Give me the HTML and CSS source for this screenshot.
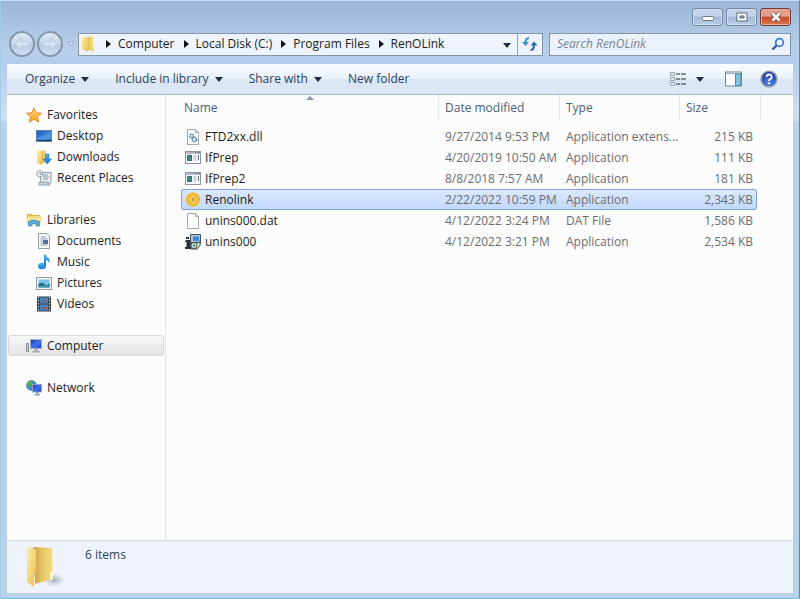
FILE: index.html
```html
<!DOCTYPE html>
<html lang="en">
<head>
<meta charset="utf-8">
<meta name="viewport" content="width=device-width, initial-scale=1">
<title>RenOLink</title>
<link rel="stylesheet" href="styles.css">
</head>
<body>
<svg width="0" height="0" class="defs" aria-hidden="true">
  <defs>
    <linearGradient id="gold" x1="0" y1="0" x2="1" y2="1"><stop offset="0" stop-color="#fff0a8"/><stop offset="1" stop-color="#e9bf48"/></linearGradient>
    <linearGradient id="goldSide" x1="0" y1="0" x2="1" y2="0"><stop offset="0" stop-color="#c9a24a"/><stop offset=".5" stop-color="#e6c665"/><stop offset="1" stop-color="#f7df82"/></linearGradient>
    <linearGradient id="screen" x1="0" y1="0" x2="1" y2="1"><stop offset="0" stop-color="#1630a8"/><stop offset=".5" stop-color="#3f74ea"/><stop offset="1" stop-color="#1a38c4"/></linearGradient>
    <linearGradient id="desk" x1="0" y1="0" x2="1" y2="1"><stop offset="0" stop-color="#1d58b8"/><stop offset=".6" stop-color="#3f86dc"/><stop offset="1" stop-color="#2468c4"/></linearGradient>
    <linearGradient id="star" x1="0" y1="0" x2="0" y2="1"><stop offset="0" stop-color="#ffe27a"/><stop offset="1" stop-color="#f99b1c"/></linearGradient>
    <linearGradient id="blue" x1="0" y1="0" x2="0" y2="1"><stop offset="0" stop-color="#4fb4f0"/><stop offset="1" stop-color="#1a78d0"/></linearGradient>
    <linearGradient id="ball" x1="0" y1="0" x2="0" y2="1"><stop offset="0" stop-color="#dfe9f4"/><stop offset=".48" stop-color="#c6d7e9"/><stop offset=".52" stop-color="#b2c8df"/><stop offset="1" stop-color="#d6e6f5"/></linearGradient>
    <radialGradient id="help" cx=".5" cy=".75" r=".7"><stop offset="0" stop-color="#5a8cf0"/><stop offset="1" stop-color="#17309c"/></radialGradient>
    <radialGradient id="shade"><stop offset="0" stop-color="#8f98a6" stop-opacity=".75"/><stop offset="1" stop-color="#a5aebb" stop-opacity="0"/></radialGradient>
    <symbol id="app" viewBox="0 0 16 16"><rect x=".5" y="1.500" width="15" height="12" fill="#f6f8f9" stroke="#8a949c"/><path d="M1 3h14" stroke="#b4bdc6" stroke-width="2"/><path d="M10 2.500h1M12 2.500h1M14 2.500h1" stroke="#59636c"/><rect x="2" y="5" width="5" height="6" fill="#33766d"/><path d="M3 6l3 4" stroke="#64a8a0"/><path d="M8.500 6h3M8.500 8h3M8.500 10h3" stroke="#a9b4bd"/><path d="M13.500 5v5" stroke="#6b767e"/></symbol>
  </defs>
</svg>
<div class="window">
  <header class="titlebar">
    <button class="ctl" aria-label="Minimize"><svg width="14" height="12" viewBox="0 0 14 12"><rect x="1.500" y="5.500" width="11" height="4" rx="1" fill="#fff" stroke="#69788c"/></svg></button>
    <button class="ctl" aria-label="Maximize"><svg width="14" height="12" viewBox="0 0 14 12"><rect x="2" y="2" width="10" height="8" fill="#fff" stroke="#5e6d80"/><rect x="5" y="5" width="4" height="2" fill="#8fa9c6" stroke="#5e6d80"/></svg></button>
    <button class="ctl close" aria-label="Close"><svg width="14" height="12" viewBox="0 0 14 12"><path d="M3.500 2.500l7 7M10.500 2.500l-7 7" stroke="#75453f" stroke-width="4.500"/><path d="M3.500 2.500l7 7M10.500 2.500l-7 7" stroke="#fff" stroke-width="2.800"/></svg></button>
  </header>

  <nav class="navbar" aria-label="Address">
    <div class="history">
      <button aria-label="Back"><svg width="28" height="28" viewBox="0 0 28 28"><circle cx="14" cy="14" r="12" fill="url(#ball)" stroke="#8496ab" stroke-width="2"/><path d="M7 14l6-6v4h8v4h-8v4z" fill="#d6e3f0" stroke="#bccde0"/></svg></button>
      <button aria-label="Forward"><svg width="28" height="28" viewBox="0 0 28 28"><circle cx="14" cy="14" r="12" fill="url(#ball)" stroke="#8496ab" stroke-width="2"/><path d="M21 14l-6-6v4H7v4h8v4z" fill="#d6e3f0" stroke="#bccde0"/></svg></button>
      <button class="recent" aria-label="Recent pages"><svg width="8" height="6" viewBox="0 0 8 6"><path d="M1 1h6L4 5z" fill="#dbe8f6" stroke="#91abc9"/></svg></button>
    </div>
    <div class="address">
      <svg class="addr-icon" width="16" height="18" viewBox="0 0 16 18"><path d="M5 3l8-2v14l-8 1z" fill="url(#goldSide)"/><path d="M2 1l6 3v13l-6-3z" fill="url(#gold)"/><path d="M12 11h2v5l-3 1z" fill="#f3d878"/></svg>
      <ol class="crumbs">
        <li><a href="#">Computer</a></li>
        <li><a href="#">Local Disk (C:)</a></li>
        <li><a href="#">Program Files</a></li>
        <li><a href="#">RenOLink</a></li>
      </ol>
      <button class="drop" aria-label="Previous locations"><i class="caret"></i></button>
      <button class="refresh" aria-label="Refresh"><svg width="16" height="14" viewBox="0 0 16 14"><path d="M7 1Q3.500 1 3.500 6" fill="none" stroke="#2f8fd0" stroke-width="2"/><path d="M0 5h7L3.500 9z" fill="#2f8fd0"/><path d="M8.500 13q3.500 0 3.500-5" fill="none" stroke="#2468b4" stroke-width="2"/><path d="M8.500 8.500h7L12 4.500z" fill="#2468b4"/></svg></button>
    </div>
    <label class="search">
      <input type="search" placeholder="Search RenOLink" aria-label="Search RenOLink">
      <svg width="14" height="14" viewBox="0 0 14 14"><circle cx="8.500" cy="5.500" r="3.800" fill="#edf6fd" stroke="#3c7cc8" stroke-width="1.800"/><path d="M5.500 8.500L1.500 12.500" stroke="#2a5fae" stroke-width="2.400"/></svg>
    </label>
  </nav>

  <div class="client">
    <div class="toolbar">
      <button>Organize<i class="caret"></i></button>
      <button>Include in library<i class="caret"></i></button>
      <button>Share with<i class="caret"></i></button>
      <button>New folder</button>
      <div class="tools">
        <button class="view" aria-label="Change your view"><svg width="16" height="14" viewBox="0 0 16 14"><path d="M.5.500h4v3h-4zM.5 5.500h4v3h-4zM.5 10.500h4v3h-4z" fill="#e4e8ec" stroke="#9aa5b1"/><path d="M6 2h4M11 2h5M6 7h4M11 7h5M6 12h4M11 12h5" stroke="#5f6e82" stroke-width="1.300"/></svg><i class="caret"></i></button>
        <button class="preview" aria-label="Show the preview pane"><svg width="17" height="16" viewBox="0 0 17 16"><rect x=".5" y="1" width="16" height="14" fill="#fff" stroke="#718294"/><path d="M1 2.500h15" stroke="#9cacbc"/><rect x="10.500" y="3" width="5.500" height="11.500" fill="#7fc4dd" stroke="#4c8ca8"/></svg></button>
        <button class="help" aria-label="Get help"><svg width="18" height="18" viewBox="0 0 18 18"><circle cx="9" cy="9" r="7.800" fill="url(#help)" stroke="#8c98ab" stroke-width="1.600"/><path d="M6.500 7q0-2.500 2.600-2.500T11.700 7q0 1.300-1.400 2T9 11" fill="none" stroke="#fff" stroke-width="1.800"/><circle cx="9" cy="13.300" r="1.100" fill="#fff"/></svg></button>
      </div>
    </div>

    <div class="panes">
      <aside class="tree">
        <section>
          <a href="#"><svg width="16" height="16" viewBox="0 0 16 16"><path d="M8 .8l2.200 5 5.300.4-4 3.600 1.200 5.300L8 12.300l-4.700 2.800 1.200-5.300-4-3.600 5.300-.4z" fill="url(#star)" stroke="#dc8428" stroke-width=".9"/></svg>Favorites</a>
          <a href="#" class="sub"><svg width="16" height="16" viewBox="0 0 16 16"><rect x=".5" y="2.500" width="15" height="11" fill="url(#desk)" stroke="#5c7fae"/><path d="M1 10L15 5v6H1z" fill="#68a8ee" opacity=".5"/><path d="M1 12.500h14" stroke="#24406e"/></svg>Desktop</a>
          <a href="#" class="sub"><svg width="16" height="16" viewBox="0 0 16 16"><path d="M5 2l5-1v12l-5 2z" fill="url(#goldSide)"/><path d="M1 1l5 1v14l-5-2z" fill="url(#gold)"/><path d="M9.500 5h3.500v5h2.500l-4.200 5L7 10h2.500z" fill="url(#blue)" stroke="#2875bd" stroke-width=".6"/></svg>Downloads</a>
          <a href="#" class="sub"><svg width="16" height="16" viewBox="0 0 16 16"><path d="M4 2.500h11v10l-2 2H5z" fill="#edf0f3" stroke="#8b97a3"/><path d="M7 5h5M7 7h6M7 9h5" stroke="#8495a6"/><path d="M3 12h9l2 3H3z" fill="#bdcbd8" stroke="#8b97a3" stroke-width=".8"/><circle cx="3.800" cy="3.800" r="3.200" fill="#f2f4f6" stroke="#98a4b0"/><path d="M4 2v2h2" fill="none" stroke="#5d6c7a" stroke-width=".8"/></svg>Recent Places</a>
        </section>
        <section>
          <a href="#"><svg width="16" height="16" viewBox="0 0 16 16"><path d="M1 2h5l1 1h7v10H1z" fill="#e3b94a"/><path d="M2 4h13v9H2z" fill="#f6dc80"/><path d="M0 6h16l-1 7H1z" fill="#f9e69c"/><path d="M2.500 14V9.500Q8 6.500 13.500 9.500V14H10v-2.500H6V14z" fill="#58aee0" stroke="#3788bc" stroke-width=".7"/></svg>Libraries</a>
          <a href="#" class="sub"><svg width="16" height="16" viewBox="0 0 16 16"><path d="M2.500.500h8l3 3v12h-11z" fill="#f8fafb" stroke="#929ca7"/><path d="M4.500 4h5M4.500 6h7M4.500 8h2M4.500 10h2M4.500 12h7" stroke="#8a9db4"/><rect x="7" y="7" width="5" height="4" fill="#4c6f9c"/></svg>Documents</a>
          <a href="#" class="sub"><svg width="16" height="16" viewBox="0 0 16 16"><ellipse cx="6" cy="12" rx="4" ry="3.200" fill="url(#blue)"/><path d="M8 12V.500h2q.300 2.500 2.800 4 1.700 1.500.4 4.500-.5-2.500-3.200-3V12z" fill="url(#blue)"/></svg>Music</a>
          <a href="#" class="sub"><svg width="16" height="16" viewBox="0 0 16 16"><rect x=".5" y="2.500" width="15" height="12" fill="#f4f6f8" stroke="#929faa"/><rect x="2.500" y="4.500" width="11" height="8" fill="#79c4e8"/><path d="M2.500 9q4-3 6 0t5-1v4.500h-11z" fill="#23718a"/><path d="M2.500 11.500h11" stroke="#52a0bb"/></svg>Pictures</a>
          <a href="#" class="sub"><svg width="16" height="16" viewBox="0 0 16 16"><path d="M1 .5h14v15H1z" fill="#35404c"/><path d="M2.500 1v15M13.500 1v15" stroke="#b7c1ca" stroke-width="1.300" stroke-dasharray="1.500 1.500"/><rect x="4" y="1.500" width="8" height="6" fill="#4389c2"/><rect x="4" y="8.500" width="8" height="6" fill="#4389c2"/><path d="M5 5l3-2 3 4zM5 12l4-2 3 4z" fill="#9b5660"/></svg>Videos</a>
        </section>
        <section>
          <a href="#" class="current"><svg width="16" height="16" viewBox="0 0 16 16"><path d="M.5 5.500h2v8h-2z" fill="#cbd0d6" stroke="#858e98"/><rect x="4.500" y="1.500" width="11" height="9" fill="url(#screen)" stroke="#a5afbd"/><path d="M8 11h4v2h2v1.500H6V13h2z" fill="#a6afbb"/></svg>Computer</a>
        </section>
        <section>
          <a href="#"><svg width="16" height="16" viewBox="0 0 16 16"><circle cx="5.500" cy="5.500" r="5" fill="#3c8fd4" stroke="#2c74b2" stroke-width=".6"/><path d="M2 2q3-2 5 0L5 5 2 7 1 5zM5 7l3 1-2 2z" fill="#52b846"/><rect x="6.500" y="4.500" width="9" height="7.500" fill="url(#screen)" stroke="#93a2c4"/><path d="M10 12h2.500v2h1.500v1.500H8.500V14H10z" fill="#98a4b4"/></svg>Network</a>
        </section>
      </aside>

      <main class="files">
        <table>
          <colgroup><col class="c-name"><col class="c-date"><col class="c-type"><col class="c-size"><col class="c-end"></colgroup>
          <thead>
            <tr><th aria-sort="ascending">Name<i class="sort"></i></th><th>Date modified</th><th>Type</th><th>Size</th><td></td></tr>
          </thead>
          <tbody>
            <tr><td><span><svg width="16" height="16" viewBox="0 0 16 16"><path d="M2.500.500h8l3 3v12h-11z" fill="#fbfcfc" stroke="#a3a9ae"/><path d="M10.500.500v3h3" fill="none" stroke="#a3a9ae"/><circle cx="6.500" cy="7" r="2" fill="#dbe8f2" stroke="#6287a8" stroke-width="1.400" stroke-dasharray="1.600 .7"/><circle cx="9.500" cy="10.500" r="2.200" fill="#dbe8f2" stroke="#4a7298" stroke-width="1.400" stroke-dasharray="1.600 .7"/></svg>FTD2xx.dll</span></td><td>9/27/2014 9:53 PM</td><td>Application extens...</td><td>215 KB</td></tr>
            <tr><td><span><svg width="16" height="16"><use href="#app"/></svg>IfPrep</span></td><td>4/20/2019 10:50 AM</td><td>Application</td><td>111 KB</td></tr>
            <tr><td><span><svg width="16" height="16"><use href="#app"/></svg>IfPrep2</span></td><td>8/8/2018 7:57 AM</td><td>Application</td><td>181 KB</td></tr>
            <tr class="selected"><td><span><svg width="16" height="16" viewBox="0 0 16 16"><circle cx="8" cy="7.500" r="7" fill="#f7b71f"/><circle cx="8" cy="7.500" r="5" fill="#f3c13e"/><path d="M8 3l3 4.500L8 12 5 7.500z" fill="#e7cd86"/><path d="M8 5l1.500 2.500L8 10 6.500 7.500z" fill="#d79a2a"/></svg>Renolink</span></td><td>2/22/2022 10:59 PM</td><td>Application</td><td>2,343 KB</td></tr>
            <tr><td><span><svg width="16" height="16" viewBox="0 0 16 16"><path d="M2.500.500h8l3 3v12h-11z" fill="#fdfdfd" stroke="#a3a9ae"/><path d="M10.500.500v3h3" fill="none" stroke="#a3a9ae"/></svg>unins000.dat</span></td><td>4/12/2022 3:24 PM</td><td>DAT File</td><td>1,586 KB</td></tr>
            <tr><td><span><svg width="16" height="16" viewBox="0 0 16 16"><path d="M5.500.500h10v9h-10z" fill="#b7c6d2" stroke="#44525e"/><path d="M8 2.500h6V7H8z" fill="#2e8fe0"/><path d="M1 3h3v2H1zM1 6h4v7h1v2H0v-2h1.500V8H0z" fill="#2a2e33"/><path d="M5.500 8.500h7.500l2-1v4l-3 3.500H6z" fill="#dfe4e6" stroke="#363e45"/><circle cx="9" cy="11.500" r="3" fill="#f2f6f3" stroke="#39463f"/><circle cx="9" cy="11.500" r="1.300" fill="#1b8e58"/></svg>unins000</span></td><td>4/12/2022 3:21 PM</td><td>Application</td><td>2,534 KB</td></tr>
          </tbody>
        </table>
      </main>
    </div>

    <footer class="details">
      <svg width="40" height="44" viewBox="0 0 40 44"><ellipse cx="29" cy="35" rx="11" ry="7" fill="url(#shade)"/><path d="M8 2l19 1 1 31-18 5z" fill="url(#goldSide)"/><path d="M2 1l9 4v21l-2 1v15l-7-5z" fill="url(#gold)"/><path d="M25 27l3-1v8l-3 1z" fill="#fff6cf"/></svg>
      <p>6 items</p>
    </footer>
  </div>
</div>
</body>
</html>
```
FILE: styles.css
```css
* { box-sizing: border-box; }

body {
  margin: 0;
  font-family: "Open Sans", "Noto Sans", sans-serif;
  font-size: 12px;
  line-height: 16px;
  color: #1c1c1c;
}

button {
  padding: 0;
  border: 0;
  background: none;
  font: inherit;
  color: inherit;
}

a { color: inherit; text-decoration: none; }
svg { display: block; flex: none; }
.defs { position: absolute; }

.window {
  display: flex;
  flex-direction: column;
  min-height: 100vh;
  padding: 0 6px 5px;
  border: 1px solid #6ec4e8;
  border-top-color: #c4dcf2;
  border-right-color: #3f93b4;
  border-left-color: #a5cbe6;
  background: linear-gradient(#9bb7d6, #b7cfea 48px, #b3cdea 64px, #d0e0f1 118px, #b9d2eb 122px);
}

/* Title bar */
.titlebar {
  display: flex;
  justify-content: flex-end;
  gap: 3px;
  padding: 7px 2px 4px;
}

.ctl {
  display: grid;
  place-items: center;
  width: 31px;
  height: 18px;
  border: 1px solid #7187a4;
  border-radius: 3px;
  background: linear-gradient(#c3d4e8 45%, #9fb7d3 50%, #b9d0e9);
  box-shadow: inset 0 0 0 1px #d3e1f0;
}

.ctl.close {
  border-color: #6d3a3c;
  background: linear-gradient(#e2a08e 45%, #c8472a 50%, #dc7a52);
  box-shadow: inset 0 0 0 1px #e6ab98;
}

.caret {
  display: inline-block;
  border: 4px solid transparent;
  border-top: 5px solid #1e2c40;
  border-bottom: 0;
}

/* Address row */
.navbar {
  display: flex;
  align-items: center;
  gap: 6px;
  padding: 0 2px 6px 1px;
}

.history { display: flex; align-items: center; width: 64px; }
.recent { margin-left: 3px; }

.address {
  display: flex;
  align-items: stretch;
  flex: 463;
  height: 23px;
  border: 1px solid #8396ab;
  background: #eef3fc;
}

.addr-icon { align-self: center; margin: 0 1px; }

.crumbs {
  display: flex;
  align-items: center;
  flex: 1;
  margin: 0;
  padding: 0;
  list-style: none;
  white-space: nowrap;
}

.crumbs li { display: flex; align-items: center; }

.crumbs li::before {
  content: "";
  margin: 0 7px 0 9px;
  border: 4px solid transparent;
  border-left: 5px solid #111;
  border-right: 0;
}

.drop { width: 20px; }

.refresh {
  display: grid;
  place-items: center;
  width: 25px;
  border-left: 1px solid #8fa0b4;
}

.search {
  display: flex;
  align-items: center;
  flex: 228;
  min-width: 0;
  height: 23px;
  padding: 0 5px 0 7px;
  border: 1px solid #8396ab;
  background: #ebf2fb;
}

.search input {
  flex: 1;
  min-width: 0;
  padding: 0;
  border: 0;
  outline: 0;
  background: none;
  font: inherit;
}

.search input::placeholder { color: #7b8390; font-style: italic; opacity: 1; }

/* Client area */
.client {
  display: flex;
  flex-direction: column;
  flex: 1;
  background: #fcfcfc;
}

.toolbar {
  display: flex;
  align-items: center;
  gap: 26px;
  height: 31px;
  padding: 0 15px 0 18px;
  border-bottom: 1px solid #a9b9cc;
  background: linear-gradient(#fafdff, #e8f1fa 48%, #dbe6f4 52%, #dde8f6);
  color: #2b3f5e;
}

.toolbar button { display: flex; align-items: center; gap: 6px; white-space: nowrap; }
.tools { display: flex; align-items: center; margin-left: auto; }
.tools .view { gap: 10px; margin-right: 21px; }
.tools .preview { margin-right: 18px; }

.panes { display: flex; flex: 1; }

.tree {
  width: 159px;
  padding: 9px 1px 0;
  border-right: 1px solid #d9e6f2;
}

.tree section { margin-bottom: 21px; }

.tree a {
  display: flex;
  align-items: center;
  gap: 5px;
  height: 21px;
  padding-left: 18px;
  white-space: nowrap;
}

.tree a.sub { padding-left: 28px; }

.tree a.current {
  padding-left: 17px;
  border: 1px solid #d8d8d8;
  border-radius: 3px;
  background: linear-gradient(#f7f7f7, #e4e4e4);
}

/* File list */
.files { flex: 1; min-width: 0; padding: 0 32px 0 15px; }

table {
  width: 100%;
  table-layout: fixed;
  border-spacing: 0;
}

.c-date { width: 121px; }
.c-type { width: 120px; }
.c-size { width: 77px; }
.c-end { width: 4px; }

thead th, thead td {
  position: relative;
  height: 24px;
  padding: 2px 0 0 6px;
  border-right: 1px solid #e3e8ee;
  font-weight: 400;
  text-align: left;
  color: #4c607a;
}

thead th:first-child { padding-left: 3px; }
thead th:nth-child(4) { border-right: 0; }
thead td { padding: 0; }

.sort {
  position: absolute;
  top: 1px;
  left: 50%;
  margin-left: -4px;
  border: 4px solid transparent;
  border-top: 0;
  border-bottom: 4px solid #7f9bb8;
}

tbody::before { content: ""; display: block; height: 7px; }

tbody td {
  height: 21px;
  padding: 0 0 0 6px;
  border: 1px solid transparent;
  border-width: 1px 0;
  color: #6d6d6d;
  white-space: nowrap;
}

tbody td:first-child { padding-left: 3px; border-left-width: 1px; color: #1c1c1c; }
tbody td:last-child { padding-right: 3px; border-right-width: 1px; text-align: right; }
tbody span { display: flex; align-items: center; gap: 4px; }

.selected td {
  border-color: #7fa3d2;
  background: linear-gradient(#dbe9fc, #c0d9fc);
}

.selected td:first-child { border-radius: 3px 0 0 3px; }
.selected td:last-child { border-radius: 0 3px 3px 0; }

/* Details pane */
.details {
  display: flex;
  gap: 20px;
  height: 53px;
  padding: 4px 0 0 18px;
  border-top: 1px solid #cbd8e6;
  background: #eff4fc;
  color: #2b3f5e;
}

.details p { margin: 2px 0 0; }
```
